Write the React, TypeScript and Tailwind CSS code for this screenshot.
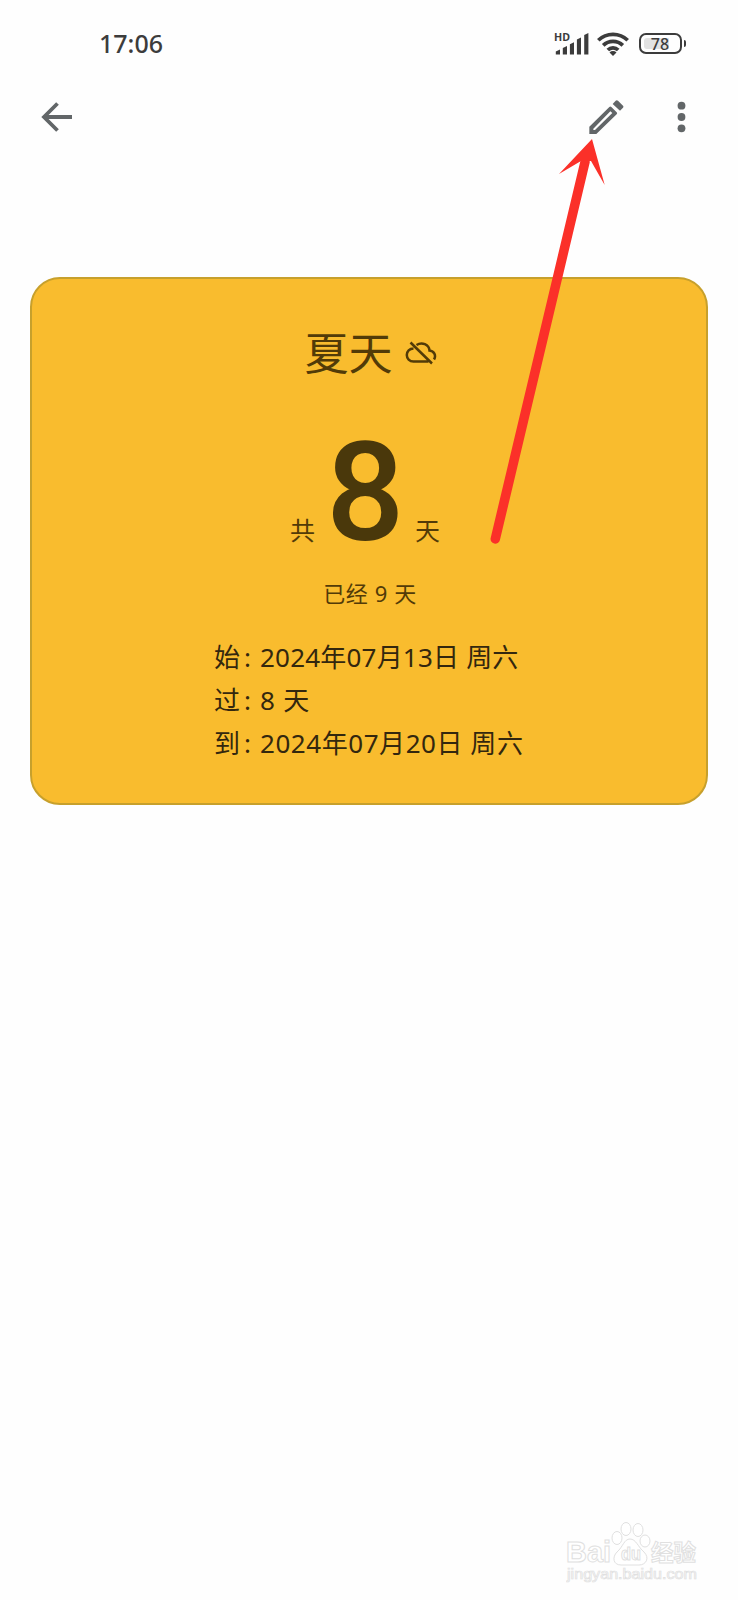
import type { ReactNode } from 'react';

const DETAILS = [
  { label: '始', value: '2024年07月13日 周六', spacing: 'tracking-[0.2px]' },
  { label: '过', value: '8 天', spacing: 'tracking-[0.8px]' },
  { label: '到', value: '2024年07月20日 周六', spacing: 'tracking-[0.55px]' },
];

function SignalIcon() {
  return (
    <svg viewBox="-1 -4 37 32" className="h-8 w-[37px] fill-[#3c3c3c]">
      <text x="0" y="8.500" fontSize="10.500" fontWeight="700" textLength="16" lengthAdjust="spacingAndGlyphs">
        HD
      </text>
      <path d="M1.800 22.500v-3l4.200-2v5zM8.800 16l4.200-2v8.500H8.800zM15.900 12.300l4.100-2v12.200h-4.100zM22.900 7.500l4.100-2v17h-4.100z" />
      <path d="M30.200 3l4.200-2v21.500h-4.200z" />
    </svg>
  );
}

function WifiIcon() {
  return (
    <svg viewBox="0 0 32 24" className="h-6 w-8 fill-none stroke-[#3c3c3c] stroke-[3.700]">
      <path d="M1.300 8.300a21 21 0 0 1 29.400 0M6.200 13.400a14 14 0 0 1 19.600 0M10.800 18a7.400 7.400 0 0 1 10.400 0" />
      <path d="M16 24l-3.500-3.500a5 5 0 0 1 7 0z" className="fill-[#3c3c3c] stroke-none" />
    </svg>
  );
}

function Battery({ level }: { level: number }) {
  return (
    <div className="flex items-center gap-0.5">
      <div className="flex h-[21px] w-[43px] rounded-[7px] border-2 border-[#3c3c3c] p-[3px]">
        <div className="flex w-full items-center justify-center rounded-[3px] bg-[linear-gradient(90deg,#e2e2e2_75%,transparent_75%)] text-[16px] leading-none font-medium">
          {level}
        </div>
      </div>
      <div className="h-[7px] w-[2.5px] rounded-r bg-[#3c3c3c]" />
    </div>
  );
}

function IconButton({ label, children }: { label: string; children: ReactNode }) {
  return (
    <button type="button" aria-label={label} className="flex size-12 items-center justify-center text-[#626668]">
      {children}
    </button>
  );
}

function Toolbar() {
  return (
    <header className="flex h-[60px] items-center px-8">
      <IconButton label="返回">
        <svg viewBox="0 0 32 32" className="size-8 fill-none stroke-current stroke-[3.800]">
          <path d="M32 16H5M17.500 2.500L4 16L17.500 29.500" />
        </svg>
      </IconButton>
      <div className="ml-auto flex gap-7">
        <IconButton label="编辑">
          <svg viewBox="144 56 111 111" className="size-[37px] fill-current">
            <path
              fillRule="evenodd"
              d="M148 139L208 80Q211 77 214 80L230 96Q233 99 230 102L169 161H148ZM160 145V149H165L217 98L211 93Z"
            />
            <path d="M218 71L227 61Q230 58 234 61L249 76Q252 79 249 82L240 91Z" />
          </svg>
        </IconButton>
        <IconButton label="更多">
          <svg viewBox="0 0 32 32" className="size-8 fill-current">
            <circle cx="15.500" cy="4.700" r="3.900" />
            <circle cx="15.500" cy="16" r="3.900" />
            <circle cx="15.500" cy="27.300" r="3.900" />
          </svg>
        </IconButton>
      </div>
    </header>
  );
}

function CloudOffIcon() {
  return (
    <svg viewBox="0 0 32 24" className="h-6 w-8 fill-none stroke-current stroke-[2.500]">
      <path d="M5.500 1.500L27 22.500M8.500 7.500C4.500 7.500 1.800 10.500 1.800 14S4.500 20.500 8.500 20.500H23.500" />
      <path d="M11.500 4C17 .5 24 3.500 24.500 9.500C29 10 31.500 14.500 29 18.500" />
    </svg>
  );
}

function EventCard() {
  return (
    <section className="mx-[30px] flex h-[528px] flex-col items-center rounded-[30px] border-2 border-[#c7a02c] bg-[#f9bc2e] text-[#523b08]">
      <h1 className="mt-[42px] flex h-16 items-center gap-3 pl-[3px] text-[44px]">
        夏天
        <CloudOffIcon />
      </h1>
      <div className="mt-[43px] mr-[8px] flex h-[130px] items-baseline text-[25px]">
        <span>共</span>
        <span className="mr-[13px] ml-[11px] w-[76px] text-center font-['Roboto'] text-[138px] leading-[130px] font-medium text-[#4a380b]">8</span>
        <span>天</span>
      </div>
      <p className="mt-[19px] pl-0.5 text-[22px] leading-8 tracking-[0.6px]">已经 9 天</p>
      <dl className="mt-[27px] w-[310px] text-[26px] leading-[43px] text-[#33270e]">
        {DETAILS.map(({ label, value, spacing }) => (
          <div key={label} className="flex whitespace-nowrap">
            <dt className="flex w-[46px] shrink-0 gap-1">
              <span>{label}</span>
              <span>:</span>
            </dt>
            <dd className={spacing}>{value}</dd>
          </div>
        ))}
      </dl>
    </section>
  );
}

function PointerArrow() {
  return (
    <svg viewBox="0 0 120 420" className="absolute top-[130px] left-[488px] h-[420px] w-[120px]">
      <path d="M7.300 409L97 32" className="fill-none stroke-[#fb3029] stroke-[9.500]" strokeLinecap="round" />
      <path d="M104 9L71 44L93 31L103 31L116.700 55Z" className="fill-[#fb3029]" />
    </svg>
  );
}

function Watermark() {
  return (
    <div className="absolute right-[38px] bottom-[14px] flex w-[134px] flex-col">
      <svg viewBox="0 0 134 68" className="h-[68px] w-[134px] fill-white stroke-[#e0e0e0]">
        <text x="0" y="44" fontSize="29" fontWeight="700" className="font-['Liberation_Sans']" textLength="45" lengthAdjust="spacingAndGlyphs">Bai</text>
        <ellipse cx="51" cy="20" rx="5" ry="6.500" />
        <ellipse cx="60" cy="11" rx="5" ry="6.500" />
        <ellipse cx="72" cy="12" rx="5" ry="6.500" />
        <ellipse cx="79" cy="23" rx="5" ry="6" />
        <path d="M64 21C70 21 72 29 78 34C84 40 80 47 73 47H55C47 47 46 39 51 34C57 29 58 21 64 21Z" />
        <text x="55" y="42" fontSize="18" fontWeight="700" className="font-['Liberation_Sans']" textLength="20" lengthAdjust="spacingAndGlyphs">du</text>
        <text x="85" y="43" fontSize="23" fontWeight="700" textLength="45" lengthAdjust="spacingAndGlyphs">经验</text>
        <text x="1" y="61" fontSize="14" strokeWidth="0.700" className="font-['Liberation_Sans']" textLength="130" lengthAdjust="spacingAndGlyphs">jingyan.baidu.com</text>
      </svg>
    </div>
  );
}

export default function App() {
  return (
    <div className="relative h-[1600px] w-[738px] overflow-hidden bg-[#fefefe] font-['Noto_Sans','Noto_Sans_CJK_SC',sans-serif]">
      <div className="flex h-[87px] items-center pr-[52px] pl-[99px] text-[#3c3c3c]">
        <span className="pt-px text-[25px] font-medium">17:06</span>
        <div className="ml-auto flex items-center">
          <SignalIcon />
          <div className="mr-2.5 ml-[7px] flex">
            <WifiIcon />
          </div>
          <Battery level={78} />
        </div>
      </div>
      <Toolbar />
      <main className="pt-[130px]">
        <EventCard />
      </main>
      <PointerArrow />
      <Watermark />
    </div>
  );
}
